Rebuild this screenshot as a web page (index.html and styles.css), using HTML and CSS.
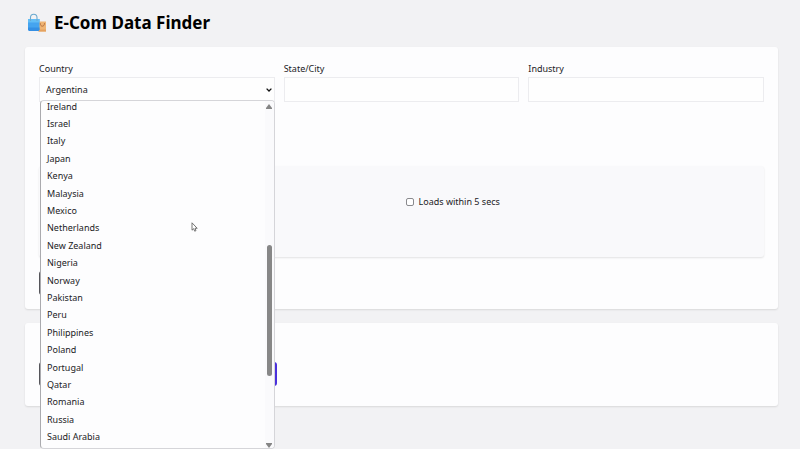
FILE: index.html
```html
<!DOCTYPE html>
<html lang="en">
<head>
<meta charset="utf-8">
<title>E-Com Data Finder</title>
<link rel="stylesheet" href="styles.css">
</head>
<body>
<main class="page">
  <header class="header">
    <svg class="logo" viewBox="0 0 20 20" aria-hidden="true">
      <path d="M11.500 8.500h7.500v10h-7.500z" fill="#efb574"/>
      <path d="M11.500 16.500h7.500v2h-7.500z" fill="#e5a260"/>
      <path d="M13.200 10.200c0 4 4.300 4 4.300 0" fill="none" stroke="#b56f3f" stroke-width="1"/>
      <path d="M1 6h11.500v10.500l-1 1.500H2l-1-1.500z" fill="#45a4ef"/>
      <path d="M1 6h11.500v3.500H1z" fill="#62bdf5"/>
      <path d="M1 14.500h11.500v2l-1 1.500H2l-1-1.500z" fill="#348fe4"/>
      <path d="M3.500 8V4.500c0-4.400 6.500-4.400 6.500 0V8" fill="none" stroke="#6aa9cf" stroke-width="1.100"/>
    </svg>
    <h1 class="title">E-Com Data Finder</h1>
  </header>

  <section class="card filters">
    <div class="fields">
      <div class="field">
        <label for="country">Country</label>
        <div class="picker">
          <select id="country" class="control select"><option>Argentina</option></select>
          <svg class="chevron" viewBox="0 0 6 4" aria-hidden="true"><path d="M.6.6L3 3 5.400.6" fill="none" stroke="#111" stroke-width="1.300"/></svg>
          <div class="popup">
            <ul class="options" role="listbox" aria-label="Country">
              <li role="option">Ireland</li>
              <li role="option">Israel</li>
              <li role="option">Italy</li>
              <li role="option">Japan</li>
              <li role="option">Kenya</li>
              <li role="option">Malaysia</li>
              <li role="option">Mexico</li>
              <li role="option">Netherlands</li>
              <li role="option">New Zealand</li>
              <li role="option">Nigeria</li>
              <li role="option">Norway</li>
              <li role="option">Pakistan</li>
              <li role="option">Peru</li>
              <li role="option">Philippines</li>
              <li role="option">Poland</li>
              <li role="option">Portugal</li>
              <li role="option">Qatar</li>
              <li role="option">Romania</li>
              <li role="option">Russia</li>
              <li role="option">Saudi Arabia</li>
            </ul>
            <div class="scrollbar">
              <svg class="arrow" viewBox="0 0 6 5"><path d="M3 0l3 4v1H0V4z" fill="#858585"/></svg>
              <div class="track"><div class="thumb"></div></div>
              <svg class="arrow" viewBox="0 0 6 5"><path d="M3 5l3-4V0H0v1z" fill="#858585"/></svg>
            </div>
          </div>
        </div>
      </div>
      <div class="field">
        <label for="city">State/City</label>
        <input id="city" class="control" type="text">
      </div>
      <div class="field">
        <label for="industry">Industry</label>
        <input id="industry" class="control" type="text">
      </div>
    </div>
    <div class="panel">
      <label class="check"><input type="checkbox">Loads within 5 secs</label>
    </div>
    <button class="button dark" type="button" aria-label="Search"></button>
  </section>

  <section class="card actions">
    <button class="button dark" type="button" aria-label="Copy"></button>
    <button class="button accent" type="button" aria-label="Export"></button>
  </section>
</main>
<svg class="cursor" viewBox="0 0 7 10" aria-hidden="true"><path d="M1 .8v7.400l1.700-1.500 1 2.500 1.300-.6-1-2.300h2.200z" fill="#fff" stroke="#555" stroke-width=".8"/></svg>
</body>
</html>
```
FILE: styles.css
```css
* {
  box-sizing: border-box;
}

body {
  margin: 0;
  min-height: 100vh;
  overflow: hidden;
  background: #f2f2f4;
  color: #1c1c1f;
  font: 9px/12px "Noto Sans", "Open Sans", sans-serif;
}

.page {
  padding: 10px 22px 0 25px;
}

.header {
  display: flex;
  align-items: center;
  gap: 7px;
  height: 26px;
  margin-bottom: 11px;
  padding-left: 2px;
}

.logo {
  width: 20px;
  height: 20px;
}

.title {
  margin: 0;
  color: #000;
  font-size: 17px;
  line-height: 26px;
}

.card {
  margin-bottom: 14px;
  padding: 14px;
  border-radius: 3px;
  background: #fdfdfe;
  box-shadow: 0 1px 2px #0000001c;
}

.filters {
  padding-top: 16px;
}

.fields {
  display: grid;
  grid-template-columns: repeat(3, 1fr);
  gap: 9px;
}

.field {
  display: flex;
  flex-direction: column;
  gap: 2px;
}

.picker {
  position: relative;
}

.control {
  display: block;
  width: 100%;
  height: 25px;
  border: 1px solid #ececef;
  border-radius: 0;
  padding: 0 6px;
  outline: 0;
  background: #fefefe;
  color: inherit;
  font: inherit;
}

.select {
  appearance: none;
}

.chevron {
  position: absolute;
  top: 11px;
  right: 3px;
  width: 6px;
  height: 4px;
  pointer-events: none;
}

.popup {
  position: absolute;
  z-index: 1;
  top: calc(100% - 2px);
  left: 1px;
  right: 0;
  display: flex;
  height: 349px;
  overflow: hidden;
  border: 1px solid #d5d5d9;
  border-left-color: #aaaaae;
  border-radius: 4px;
  background: #fdfdfe;
}

.options {
  flex: 1;
  display: grid;
  grid-auto-rows: 1fr;
  align-items: center;
  height: 348px;
  margin: -3px 0 0;
  padding: 0 6px;
  list-style: none;
}

.scrollbar {
  display: flex;
  flex-direction: column;
  align-items: center;
  width: 9px;
  padding: 3px 0 0;
  background: #fafafc;
}

.arrow {
  width: 6px;
  height: 5px;
}

.track {
  flex: 1;
  padding-top: 136px;
}

.thumb {
  width: 5px;
  height: 131px;
  border-radius: 3px;
  background: #878787;
}

.panel {
  display: grid;
  grid-template-columns: 1fr 1fr;
  margin: 64px 0 14px;
  padding: 30px 0 49px;
  border-radius: 3px;
  background: #f9f9fb;
  box-shadow: 0 1px 2px #0000001c;
}

.check {
  grid-column: 2;
  display: flex;
  align-items: center;
  gap: 5px;
  padding-left: 4px;
}

.check input {
  width: 8px;
  height: 8px;
  margin: 0;
  appearance: none;
  border: 1px solid #8a8a8e;
  border-radius: 2px;
  background: #fff;
}

.button {
  display: block;
  height: 24px;
  border: 0;
  border-radius: 3px;
}

.dark {
  width: 96px;
  background: #55555a;
}

.actions {
  display: flex;
  gap: 9px;
  padding: 39px 14px 20px;
}

.accent {
  width: 133px;
  background: #4a30dc;
}

.cursor {
  position: absolute;
  z-index: 2;
  left: 191px;
  top: 222px;
  width: 7px;
  height: 10px;
}
```
